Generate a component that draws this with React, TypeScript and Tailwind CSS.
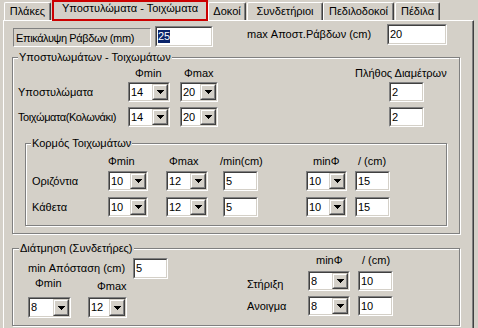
import type { ReactNode } from "react"

// win classic sunken field (edit box / combo frame)
function Edit({ className, children }: { className: string; children: ReactNode }) {
  return (
    <div className={`${className} shrink-0 border border-t-[#808080] border-l-[#808080] border-r-white border-b-white`}>
      <div className="flex h-full items-center border border-t-[#404040] border-l-[#404040] border-r-[#d4d0c8] border-b-[#d4d0c8] bg-white pl-[1px]">
        {children}
      </div>
    </div>
  )
}

function Arrow() {
  return (
    <svg width="7" height="4" shapeRendering="crispEdges">
      <rect x="0" y="0" width="7" height="1" />
      <rect x="1" y="1" width="5" height="1" />
      <rect x="2" y="2" width="3" height="1" />
      <rect x="3" y="3" width="1" height="1" />
    </svg>
  )
}

function Combo({ className, value }: { className: string; value: string }) {
  return (
    <Edit className={className}>
      <span className="flex-1">{value}</span>
      <div className="h-full w-[16px] border border-t-[#d4d0c8] border-l-[#d4d0c8] border-r-[#404040] border-b-[#404040]">
        <div className="flex h-full items-center justify-center border border-t-white border-l-white border-r-[#808080] border-b-[#808080] bg-[#d4d0c8]">
          <Arrow />
        </div>
      </div>
    </Edit>
  )
}

function Group({ title, className, legend, children }: { title: string; className: string; legend: string; children: ReactNode }) {
  return (
    <div className={`relative shrink-0 border border-[#808080] shadow-[1px_1px_0_#fff,inset_1px_1px_0_#fff] ${className}`}>
      <span className={`absolute top-[-7px] ${legend} whitespace-nowrap bg-[#d4d0c8] px-[1px] leading-[13px]`}>{title}</span>
      {children}
    </div>
  )
}

function Tab({ className, label }: { className: string; label: string }) {
  return (
    <div className={`${className} h-[18px] shrink-0 rounded-t-[2px] border-t border-l border-r border-t-white border-l-white border-r-[#404040] shadow-[inset_-1px_0_0_#808080] pt-[2px] text-center`}>
      {label}
    </div>
  )
}

export default function App() {
  return (
    <div className="h-[328px] w-[478px] overflow-hidden bg-[#d4d0c8] font-['Liberation_Sans',Arial,sans-serif] text-[11px] leading-[13px] text-black">
      {/* tabs */}
      <div className="flex h-[20px] items-end pl-[4px]">
        <Tab className="w-[47px]" label="Πλάκες" />
        <div className="relative z-10 -mb-[1px] ml-[1px] h-[21px] w-[156px] shrink-0 border-2 border-[#cc0000] bg-[#d4d0c8] text-center">
          Υποστυλώματα - Τοιχώματα
        </div>
        <Tab className="w-[38px]" label="Δοκοί" />
        <Tab className="ml-[1px] w-[76px]" label="Συνδετήριοι" />
        <Tab className="w-[71px]" label="Πεδιλοδοκοί" />
        <Tab className="ml-[1px] w-[45px]" label="Πέδιλα" />
      </div>

      {/* panel */}
      <div className="ml-[3px] h-[308px] w-[471px] border-t border-l border-r border-t-white border-l-white border-r-[#404040] shadow-[inset_-1px_0_0_#808080]">
        <div className="flex items-start">
          <div className="ml-[9px] mt-[7px] h-[19px] w-[138px] shrink-0 whitespace-nowrap border border-t-[#808080] border-l-[#808080] border-r-white border-b-white pl-[2px] pt-[3px] tracking-[-0.4px]">
            Επικάλυψη Ράβδων (mm)
          </div>
          <Edit className="ml-[4px] mt-[5px] h-[21px] w-[58px]">
            <span className="bg-[#0a246a] text-white">25</span>
          </Edit>
          <div className="ml-[34px] mt-[7px] w-[140px] shrink-0 whitespace-nowrap">max Αποστ.Ράβδων (cm)</div>
          <Edit className="mt-[3px] h-[21px] w-[60px]">20</Edit>
        </div>

        <Group title="Υποστυλωμάτων - Τοιχωμάτων" className="ml-[8px] mt-[10px] h-[177px] w-[448px]" legend="left-[5px]">
          <div className="mt-[9px] flex whitespace-nowrap">
            <span className="ml-[122px] w-[49px] shrink-0">Φmin</span>
            <span className="w-[171px] shrink-0">Φmax</span>
            <span>Πλήθος Διαμέτρων</span>
          </div>
          <div className="mt-[2px] flex items-center">
            <span className="ml-[5px] w-[110px] shrink-0 whitespace-nowrap">Υποστυλώματα</span>
            <Combo className="h-[20px] w-[42px]" value="14" />
            <Combo className="ml-[10px] h-[20px] w-[38px]" value="20" />
            <Edit className="ml-[171px] h-[20px] w-[35px]">2</Edit>
          </div>
          <div className="mt-[5px] flex items-center">
            <span className="ml-[5px] w-[110px] shrink-0 whitespace-nowrap tracking-[-0.4px]">Τοιχώματα(Κολωνάκι)</span>
            <Combo className="h-[20px] w-[42px]" value="14" />
            <Combo className="ml-[10px] h-[20px] w-[38px]" value="20" />
            <Edit className="ml-[171px] h-[20px] w-[35px]">2</Edit>
          </div>

          <Group title="Κορμός Τοιχωμάτων" className="ml-[12px] mt-[16px] h-[83px] w-[422px]" legend="left-[5px]">
            <div className="mt-[11px] flex whitespace-nowrap">
              <span className="ml-[82px] w-[61px] shrink-0">Φmin</span>
              <span className="w-[51px] shrink-0">Φmax</span>
              <span className="w-[93px] shrink-0">/min(cm)</span>
              <span className="w-[45px] shrink-0">minΦ</span>
              <span>/ (cm)</span>
            </div>
            <div className="mt-[3px] flex items-center">
              <span className="ml-[6px] w-[76px] shrink-0">Οριζόντια</span>
              <Combo className="h-[20px] w-[40px]" value="10" />
              <Combo className="ml-[18px] h-[20px] w-[42px]" value="12" />
              <Edit className="ml-[15px] h-[20px] w-[35px]">5</Edit>
              <Combo className="ml-[48px] h-[20px] w-[41px]" value="10" />
              <Edit className="ml-[8px] h-[20px] w-[35px]">15</Edit>
            </div>
            <div className="mt-[6px] flex items-center">
              <span className="ml-[6px] w-[76px] shrink-0">Κάθετα</span>
              <Combo className="h-[20px] w-[40px]" value="10" />
              <Combo className="ml-[18px] h-[20px] w-[42px]" value="12" />
              <Edit className="ml-[15px] h-[20px] w-[35px]">5</Edit>
              <Combo className="ml-[48px] h-[20px] w-[41px]" value="10" />
              <Edit className="ml-[8px] h-[20px] w-[35px]">15</Edit>
            </div>
          </Group>
        </Group>

        <Group title="Διάτμηση (Συνδετήρες)" className="ml-[8px] mt-[14px] flex h-[78px] w-[448px]" legend="left-[6px]">
          {/* left side */}
          <div className="w-[155px] shrink-0">
            <div className="mt-[9px] flex items-center">
              <span className="ml-[15px] w-[105px] shrink-0 whitespace-nowrap">min Απόσταση (cm)</span>
              <Edit className="h-[21px] w-[35px]">5</Edit>
            </div>
            <div className="-mt-[2px] flex items-start">
              <span className="ml-[22px] w-[62px] shrink-0">Φmin</span>
              <span className="mt-[3px]">Φmax</span>
            </div>
            <div className="mt-[4px] flex">
              <Combo className="ml-[15px] h-[21px] w-[43px]" value="8" />
              <Combo className="ml-[17px] h-[21px] w-[39px]" value="12" />
            </div>
          </div>
          {/* right side */}
          <div className="flex-1">
            <div className="mt-[5px] flex whitespace-nowrap">
              <span className="ml-[148px] w-[46px] shrink-0">minΦ</span>
              <span>/ (cm)</span>
            </div>
            <div className="mt-[4px] flex items-start">
              <span className="ml-[79px] mt-[7px] w-[61px] shrink-0">Στήριξη</span>
              <Combo className="h-[20px] w-[42px]" value="8" />
              <Edit className="ml-[8px] h-[20px] w-[35px]">10</Edit>
            </div>
            <div className="mt-[5px] flex items-start">
              <span className="ml-[79px] mt-[4px] w-[61px] shrink-0">Ανοιγμα</span>
              <Combo className="h-[20px] w-[42px]" value="8" />
              <Edit className="ml-[8px] h-[20px] w-[35px]">10</Edit>
            </div>
          </div>
        </Group>
      </div>
    </div>
  )
}
